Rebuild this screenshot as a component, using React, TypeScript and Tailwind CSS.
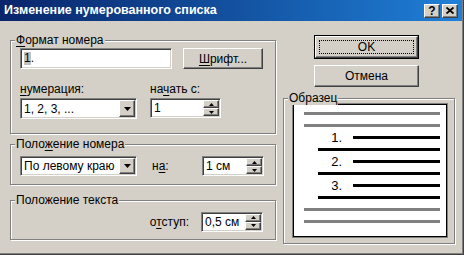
import React from "react";

const sunken =
  "border border-t-[#808080] border-l-[#808080] border-b-white border-r-white shadow-[inset_1px_1px_0_#404040,inset_-1px_-1px_0_#d4d0c8] bg-white";
const raised =
  "border border-t-white border-l-white border-b-[#404040] border-r-[#404040] shadow-[inset_-1px_-1px_0_#808080,inset_1px_1px_0_#d4d0c8] bg-[#d4d0c8]";
const etched =
  "relative border border-[#808080] shadow-[1px_1px_0_#ffffff,inset_1px_1px_0_#ffffff]";

function Legend({ children }: { children: React.ReactNode }) {
  return (
    <span className="absolute left-[4px] top-[-8px] bg-[#d4d0c8] pl-[1px] pr-[1px] leading-[14px] text-black">
      {children}
    </span>
  );
}

function DownArrow() {
  return (
    <svg width="7" height="4" viewBox="0 0 7 4">
      <polygon points="0,0 7,0 3.5,4" fill="#000" />
    </svg>
  );
}

function Combo({ text, w, h }: { text: string; w: string; h: string }) {
  return (
    <div className={`${sunken} ${w} ${h} flex items-stretch p-[1px]`}>
      <div className="flex-1 flex items-center pl-[2px] leading-none">{text}</div>
      <div className={`${raised} w-[16px] flex items-center justify-center`}>
        <DownArrow />
      </div>
    </div>
  );
}

function Spin({ text, w, h }: { text: string; w: string; h: string }) {
  return (
    <div className={`${sunken} ${w} ${h} flex items-stretch p-[1px]`}>
      <div className="flex-1 flex items-center pl-[2px] leading-none">{text}</div>
      <div className="w-[16px] flex flex-col">
        <div className={`${raised} flex-1 flex items-center justify-center`}>
          <svg width="5" height="3" viewBox="0 0 5 3">
            <polygon points="2.5,0 5,3 0,3" fill="#000" />
          </svg>
        </div>
        <div className={`${raised} flex-1 flex items-center justify-center`}>
          <svg width="5" height="3" viewBox="0 0 5 3">
            <polygon points="0,0 5,0 2.5,3" fill="#000" />
          </svg>
        </div>
      </div>
    </div>
  );
}

function GrayLine() {
  return (
    <div className="h-[12px] flex items-center pl-[10px] pr-[6px]">
      <div className="h-[3px] flex-1 bg-[#808080]" />
    </div>
  );
}
function BlackLine() {
  return (
    <div className="h-[12px] flex items-center pl-[24px] pr-[6px]">
      <div className="h-[3px] flex-1 bg-black" />
    </div>
  );
}
function NumLine({ n }: { n: string }) {
  return (
    <div className="h-[12px] flex items-center pr-[6px]">
      <div className="w-[48px] text-right text-[13px] leading-none">{n}</div>
      <div className="ml-[11px] h-[3px] flex-1 bg-black" />
    </div>
  );
}

export default function App() {
  return (
    <div
      className="w-[464px] h-[255px] overflow-hidden border-r border-b border-[#404040] text-[12px] text-black"
      style={{ fontFamily: '"Liberation Sans", Arial, sans-serif' }}
    >
      <div className="h-full border-r border-b border-[#808080] bg-[#d4d0c8] flex flex-col">
        {/* Title bar */}
        <div className="h-[21px] shrink-0 flex items-center justify-between pl-[4px] pr-[4px] bg-gradient-to-r from-[#0a246a] to-[#2080d8]">
          <span className="text-white font-bold text-[12.5px] leading-none">
            Изменение нумерованного списка
          </span>
          <div className="flex gap-[2px]">
            <div className={`${raised} w-[16px] h-[14px] flex items-center justify-center text-[12px] font-bold leading-none`}>
              ?
            </div>
            <div className={`${raised} w-[16px] h-[14px] flex items-center justify-center`}>
              <svg width="8" height="7" viewBox="0 0 8 7">
                <path d="M0.5 0.5 L7.5 6.5 M7.5 0.5 L0.5 6.5" stroke="#000" strokeWidth="1.8" />
              </svg>
            </div>
          </div>
        </div>

        {/* Body */}
        <div className="flex flex-1">
          {/* Left column */}
          <div className="ml-[10px] w-[266px] flex flex-col">
            {/* Формат номера */}
            <div className={`${etched} mt-[19px] h-[94px] pl-[9px] pt-[7px]`}>
              <Legend>
                <u className="underline-offset-2">Ф</u>ормат номера
              </Legend>
              <div className="flex gap-[11px]">
                <div className={`${sunken} w-[152px] h-[21px] flex items-center pl-[3px]`}>
                  <span className="bg-[#c0c0c0] leading-[13px]">1</span>
                  <span className="leading-[13px]">.</span>
                </div>
                <div className={`${raised} w-[80px] h-[21px] flex items-center justify-center`}>
                  <span>
                    <u className="underline-offset-2">Ш</u>рифт...
                  </span>
                </div>
              </div>
              <div className="flex mt-[13px] gap-[13px]">
                <div className="flex flex-col">
                  <span className="leading-[14px]">
                    <u className="underline-offset-2">н</u>умерация:
                  </span>
                  <div className="mt-[2px]">
                    <Combo text="1, 2, 3, ..." w="w-[117px]" h="h-[21px]" />
                  </div>
                </div>
                <div className="flex flex-col">
                  <span className="leading-[14px]">
                    на<u className="underline-offset-2">ч</u>ать с:
                  </span>
                  <div className="mt-[2px]">
                    <Spin text="1" w="w-[71px]" h="h-[20px]" />
                  </div>
                </div>
              </div>
            </div>

            {/* Положение номера */}
            <div className={`${etched} mt-[10px] h-[41px] pl-[9px] pr-[11px] flex items-center`}>
              <Legend>
                Поло<u className="underline-offset-2">ж</u>ение номера
              </Legend>
              <div className="mt-[3px] flex items-center w-full">
                <Combo text="По левому краю" w="w-[117px]" h="h-[20px]" />
                <span className="ml-[15px]">
                  н<u className="underline-offset-2">а</u>:
                </span>
                <div className="ml-auto">
                  <Spin text="1 см" w="w-[62px]" h="h-[20px]" />
                </div>
              </div>
            </div>

            {/* Положение текста */}
            <div className={`${etched} mt-[15px] h-[40px] pr-[12px] flex items-center justify-end`}>
              <Legend>Положение текста</Legend>
              <div className="mt-[3px] flex items-center gap-[12px]">
                <span>
                  о<u className="underline-offset-2">т</u>ступ:
                </span>
                <Spin text="0,5 см" w="w-[62px]" h="h-[20px]" />
              </div>
            </div>
          </div>

          {/* Right column */}
          <div className="ml-[7px] w-[172px] flex flex-col">
            <div className="ml-[31px] mt-[14px] w-[105px] h-[24px] border border-black">
              <div className={`${raised} h-full p-[3px]`}>
                <div className="h-full border border-dotted border-black flex items-center justify-center">
                  OK
                </div>
              </div>
            </div>
            <div className={`${raised} ml-[31px] mt-[6px] w-[105px] h-[22px] flex items-center justify-center`}>
              Отмена
            </div>

            <div className={`${etched} mt-[11px] w-[172px] h-[146px] pl-[8px] pt-[4px]`}>
              <Legend>Образец</Legend>
              <div className="w-[156px] h-[135px] border border-[#808080]">
                <div className="h-full border border-black bg-white pt-[2px]">
                  <GrayLine />
                  <GrayLine />
                  <NumLine n="1." />
                  <BlackLine />
                  <NumLine n="2." />
                  <BlackLine />
                  <NumLine n="3." />
                  <BlackLine />
                  <GrayLine />
                  <GrayLine />
                </div>
              </div>
            </div>
          </div>
        </div>
      </div>
    </div>
  );
}
